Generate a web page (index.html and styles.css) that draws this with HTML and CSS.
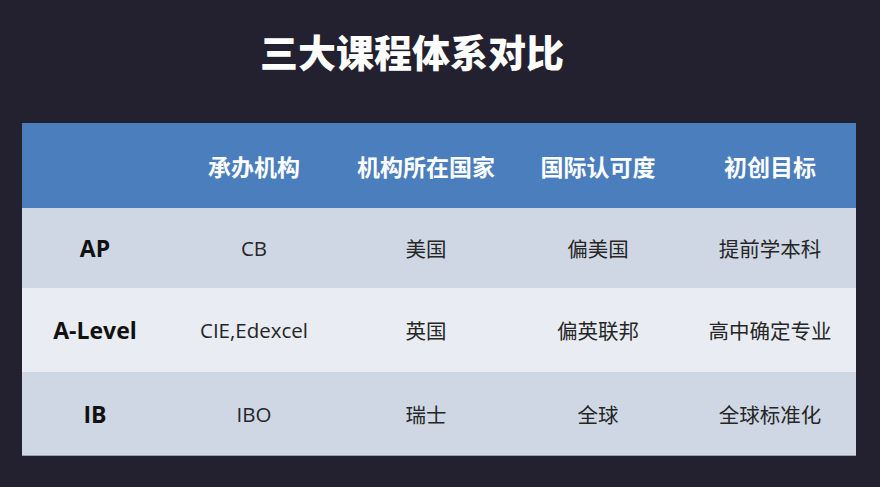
FILE: index.html
```html
<!DOCTYPE html>
<html lang="zh-CN">
<head>
<meta charset="utf-8">
<link rel="stylesheet" href="styles.css">
</head>
<body>
<div class="page">
  <h1 class="title">三大课程体系对比</h1>
  <div class="table">
    <div class="row head">
      <div class="cell"></div>
      <div class="cell">承办机构</div>
      <div class="cell">机构所在国家</div>
      <div class="cell">国际认可度</div>
      <div class="cell">初创目标</div>
    </div>
    <div class="row odd r1">
      <div class="cell label">AP</div>
      <div class="cell">CB</div>
      <div class="cell">美国</div>
      <div class="cell">偏美国</div>
      <div class="cell">提前学本科</div>
    </div>
    <div class="row even r2">
      <div class="cell label">A-Level</div>
      <div class="cell">CIE,Edexcel</div>
      <div class="cell">英国</div>
      <div class="cell">偏英联邦</div>
      <div class="cell">高中确定专业</div>
    </div>
    <div class="row odd r3">
      <div class="cell label">IB</div>
      <div class="cell">IBO</div>
      <div class="cell">瑞士</div>
      <div class="cell">全球</div>
      <div class="cell">全球标准化</div>
    </div>
  </div>
</div>
</body>
</html>
```
FILE: styles.css
```css
html, body {
  margin: 0;
  padding: 0;
  background: #23212f;
}
.page {
  width: 880px;
  height: 487px;
  box-sizing: border-box;
  padding: 0 24px 0 22px;
  font-family: "Open Sans", "Noto Sans CJK SC", sans-serif;
}
.title {
  margin: 0;
  height: 123px;
  box-sizing: border-box;
  padding: 26px 54px 0 0;
  text-align: center;
  color: #ffffff;
  font-family: "Noto Sans CJK SC", sans-serif;
  font-weight: 900;
  font-size: 38px;
  line-height: 50px;
}
.table {
  display: flex;
  flex-direction: column;
  border-bottom: 1px solid #9aa0ad;
}
.row {
  display: grid;
  grid-template-columns: 146px 172px 172px 172px 172px;
  align-items: center;
}
.cell {
  text-align: center;
  color: #262626;
  font-size: 20.5px;
}
.head {
  height: 85px;
  background: #4b7ebd;
}
.head .cell {
  color: #ffffff;
  font-family: "Noto Sans CJK SC", sans-serif;
  font-weight: 700;
  font-size: 23px;
  padding-top: 1px;
}
.r1 { height: 80px; }
.r2 { height: 84px; }
.r3 { height: 83px; }
.odd { background: #cfd7e5; }
.even { background: #e9ecf3; }
.label {
  font-weight: 700;
  color: #111111;
  font-size: 23px;
}
```
